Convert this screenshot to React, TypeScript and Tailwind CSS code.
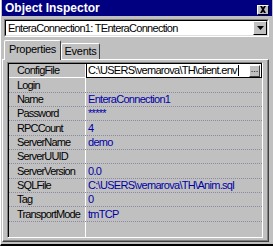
import React from "react";

type Prop = { name: string; value: string };

const PROPS: Prop[] = [
  { name: "ConfigFile", value: "C:\\USERS\\vemarova\\TH\\client.env" },
  { name: "Login", value: "" },
  { name: "Name", value: "EnteraConnection1" },
  { name: "Password", value: "*****" },
  { name: "RPCCount", value: "4" },
  { name: "ServerName", value: "demo" },
  { name: "ServerUUID", value: "" },
  { name: "ServerVersion", value: "0.0" },
  { name: "SQLFile", value: "C:\\USERS\\vemarova\\TH\\Anim.sql" },
  { name: "Tag", value: "0" },
  { name: "TransportMode", value: "tmTCP" },
];

function PropRow({ prop, index }: { prop: Prop; index: number }) {
  if (index === 0) {
    return (
      <div className="flex h-[15px] border-t border-black">
        <div className="w-[76px] shrink-0 overflow-hidden whitespace-nowrap border-b border-white pl-[8px] leading-[13px] text-black">
          {prop.name}
        </div>
        <div className="w-px shrink-0 bg-white" />
        <div className="relative -mt-px flex h-[15px] flex-1 items-center border border-black bg-white pl-[1px] pr-[13px]">
          <span className="text-black">{prop.value}</span>
          <span className="ml-[1px] h-[11px] w-px bg-black" />
          <div className="absolute right-[1px] top-[1px] flex h-[12px] w-[11px] items-start justify-center border border-t-white border-l-white border-r-[#404040] border-b-[#404040] bg-[#c0c0c0] text-[9px] leading-[6px] tracking-normal">
            ...
          </div>
        </div>
      </div>
    );
  }
  // rows alternate 14/15px so eleven rows land on the 14.3px pitch of the original
  const tall = index % 3 === 1;
  return (
    <div className={`flex border-b border-dotted border-[#8a8aa4] ${tall ? "h-[15px]" : "h-[14px]"}`}>
      <div
        className={`w-[76px] shrink-0 overflow-hidden whitespace-nowrap pl-[8px] tracking-[-0.85px] text-black ${
          tall ? "leading-[14px]" : "leading-[13px]"
        }`}
      >
        {prop.name}
      </div>
      <div className="w-px shrink-0 bg-white" />
      <div className={`flex-1 pl-[2px] text-[#0000a8] ${tall ? "leading-[14px]" : "leading-[13px]"}`}>
        {prop.value}
      </div>
    </div>
  );
}

export default function App() {
  return (
    <div className="relative flex h-[246px] w-[273px] flex-col overflow-hidden border-b-2 border-l border-b-black border-l-white bg-[#c0c0c0] font-['Liberation_Sans',Arial,sans-serif] text-[11px] tracking-[-0.7px]">
      {/* caption */}
      <div className="mx-[1px] flex h-[16px] shrink-0 items-center justify-between bg-[#000080] pl-[3px] pr-[3px]">
        <span className="text-[12px] font-bold tracking-[0px] text-white">Object Inspector</span>
        <div className="mt-[3px] flex h-[10px] w-[12px] items-center justify-center border border-t-white border-l-white border-r-black border-b-black bg-[#c0c0c0]">
          <svg width="8" height="7" viewBox="0 0 8 7">
            <path d="M1 0h2l1 1.5L5 0h2L5 3.5 7 7H5L4 5.5 3 7H1l2-3.5z" fill="#000" />
          </svg>
        </div>
      </div>

      {/* component combo */}
      <div className="ml-[3px] mr-[4px] mt-[3px] h-[18px] shrink-0 border border-t-[#808080] border-l-[#808080] border-r-white border-b-white">
        <div className="flex h-full items-center border border-t-black border-l-black border-r-[#dfdfdf] border-b-[#dfdfdf] bg-white pl-[2px]">
          <span className="flex-1 text-black">EnteraConnection1: TEnteraConnection</span>
          <div className="flex h-[14px] w-[14px] items-center justify-center border border-t-white border-l-white border-r-black border-b-black bg-[#c0c0c0]">
            <svg width="7" height="4" viewBox="0 0 7 4">
              <path d="M0 0h7L3.5 4z" fill="#000" />
            </svg>
          </div>
        </div>
      </div>

      {/* tabs */}
      <div className="relative z-10 ml-[3px] mt-[3px] flex h-[19px] shrink-0 items-end tracking-[-0.3px]">
        <div className="-mb-px flex h-[20px] w-[57px] items-center justify-center rounded-t-[2px] border border-b-0 border-t-white border-l-white border-r-[#404040] bg-[#c0c0c0] pb-[2px] text-black">
          Properties
        </div>
        <div className="flex h-[16px] w-[39px] items-center justify-center rounded-t-[2px] border border-b-0 border-t-white border-l-white border-r-[#404040] bg-[#c0c0c0] text-black">
          Events
        </div>
      </div>

      {/* tab sheet */}
      <div className="mb-[2px] ml-[1px] mr-[4px] flex flex-1 flex-col border border-t-white border-l-white border-r-[#404040] border-b-[#404040]">
        <div className="flex flex-1 flex-col border-b border-r border-b-[#808080] border-r-[#808080] px-[4px] pb-[2px] pt-[2px]">
          <div className="flex flex-1 flex-col border border-t-[#808080] border-l-[#808080] border-r-white border-b-white">
            <div className="flex flex-1 flex-col border-l border-l-black">
              {PROPS.map((p, i) => (
                <PropRow key={p.name} prop={p} index={i} />
              ))}
              <div className="flex flex-1">
                <div className="w-[76px] shrink-0" />
                <div className="w-px shrink-0 bg-white" />
              </div>
            </div>
          </div>
        </div>
      </div>
    </div>
  );
}
